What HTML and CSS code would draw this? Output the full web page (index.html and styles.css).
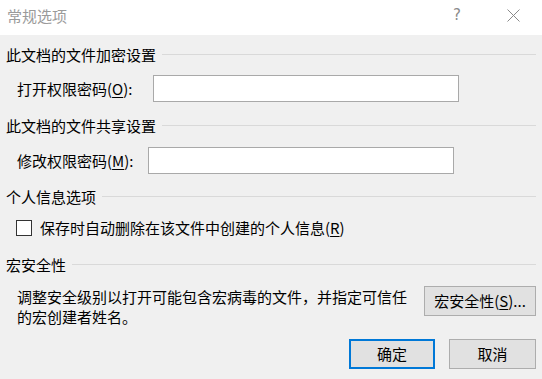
FILE: index.html
```html
<!DOCTYPE html>
<html lang="zh-CN">
<head>
<meta charset="utf-8">
<title>常规选项</title>
<link rel="stylesheet" href="styles.css">
</head>
<body>
<div class="dialog">
  <div class="titlebar">
    <span class="title">常规选项</span>
    <span class="help">?</span>
    <span class="close">
      <svg width="13" height="13" viewBox="0 0 13 13"><path d="M0.5 0.5 L12.5 12.5 M12.5 0.5 L0.5 12.5" stroke="#8a8a8a" stroke-width="1" fill="none"/></svg>
    </span>
  </div>
  <div class="content">
    <div class="group-head g1"><span>此文档的文件加密设置</span><i class="rule"></i></div>
    <div class="field f1">
      <label class="lbl lbl-open">打开权限密码(<u>O</u>):</label>
      <div class="input in-open"></div>
    </div>
    <div class="group-head g2"><span>此文档的文件共享设置</span><i class="rule"></i></div>
    <div class="field f2">
      <label class="lbl lbl-mod">修改权限密码(<u>M</u>):</label>
      <div class="input in-mod"></div>
    </div>
    <div class="group-head g3"><span>个人信息选项</span><i class="rule"></i></div>
    <div class="check-row">
      <span class="checkbox"></span>
      <span class="check-label">保存时自动删除在该文件中创建的个人信息(<u>R</u>)</span>
    </div>
    <div class="group-head g4"><span>宏安全性</span><i class="rule"></i></div>
    <div class="macro-row">
      <p class="desc">调整安全级别以打开可能包含宏病毒的文件，并指定可信任<br>的宏创建者姓名。</p>
      <button class="btn btn-macro">宏安全性(<u>S</u>)...</button>
    </div>
    <div class="actions">
      <button class="btn btn-ok">确定</button>
      <button class="btn btn-cancel">取消</button>
    </div>
  </div>
</div>
</body>
</html>
```
FILE: styles.css
```css
html, body {
  margin: 0;
  padding: 0;
}
body {
  width: 542px;
  height: 379px;
  overflow: hidden;
  background: #f0f0f0;
  font-family: "Noto Sans CJK SC", "Noto Sans", sans-serif;
  font-size: 15px;
  color: #000;
}
.dialog {
  width: 542px;
  height: 379px;
  background: #f0f0f0;
}
.titlebar {
  height: 35px;
  background: #fff;
  display: flex;
  align-items: center;
  position: relative;
}
.title {
  margin-left: 7px;
  color: #9a9a9a;
  line-height: 20px;
  margin-top: -3px;
}
.help {
  position: absolute;
  left: 453px;
  top: 5px;
  font-family: "DejaVu Sans", sans-serif;
  font-size: 15px;
  color: #8a8a8a;
  line-height: 20px;
}
.close {
  position: absolute;
  left: 507px;
  top: 9px;
  width: 13px;
  height: 13px;
}
.close svg { display: block; }
.content {
  padding: 0 6px 0 6px;
}
.group-head {
  display: flex;
  align-items: center;
  height: 20px;
  line-height: 20px;
}
.group-head span {
  margin-right: 6px;
  white-space: nowrap;
}
.rule {
  flex: 1;
  height: 0;
  border-top: 1px solid #d9d9d9;
  margin-top: -1px;
}
.g1 { margin-top: 10px; }
.g2 { margin-top: 14px; }
.g3 { margin-top: 13px; }
.g4 { margin-top: 17px; }
.field {
  display: flex;
  align-items: center;
  padding-left: 11px;
}
.f1 { margin-top: 10px; }
.f2 { margin-top: 11px; }
.lbl {
  line-height: 20px;
  white-space: nowrap;
}
.lbl-open { width: 136px; }
.lbl-mod { width: 131px; }
.input {
  box-sizing: border-box;
  height: 27px;
  width: 306px;
  background: #fff;
  border: 1px solid #a9a9a9;
}
.check-row {
  display: flex;
  align-items: center;
  margin-top: 11px;
  padding-left: 10px;
  height: 20px;
}
.checkbox {
  box-sizing: border-box;
  width: 16px;
  height: 16px;
  border: 1px solid #333;
  background: #fff;
  margin-right: 8px;
}
.check-label {
  line-height: 20px;
  white-space: nowrap;
}
.macro-row {
  display: flex;
  align-items: flex-start;
  justify-content: space-between;
  margin-top: 11px;
  height: 41px;
}
.desc {
  margin: 1px 0 0 11px;
  line-height: 20px;
  white-space: nowrap;
}
.btn {
  box-sizing: border-box;
  font-family: inherit;
  font-size: 15px;
  color: #000;
  background: #e1e1e1;
  border: 1px solid #adadad;
  height: 30px;
  padding: 0;
  line-height: 20px;
  margin: 0;
}
.btn-macro {
  width: 112px;
}
.actions {
  display: flex;
  justify-content: flex-end;
  gap: 14px;
  margin-top: 12px;
}
.btn-ok {
  width: 86px;
  border: 2px solid #0078d7;
}
.btn-cancel {
  width: 87px;
}
u {
  text-decoration: underline;
  text-underline-offset: 2px;
}
```
